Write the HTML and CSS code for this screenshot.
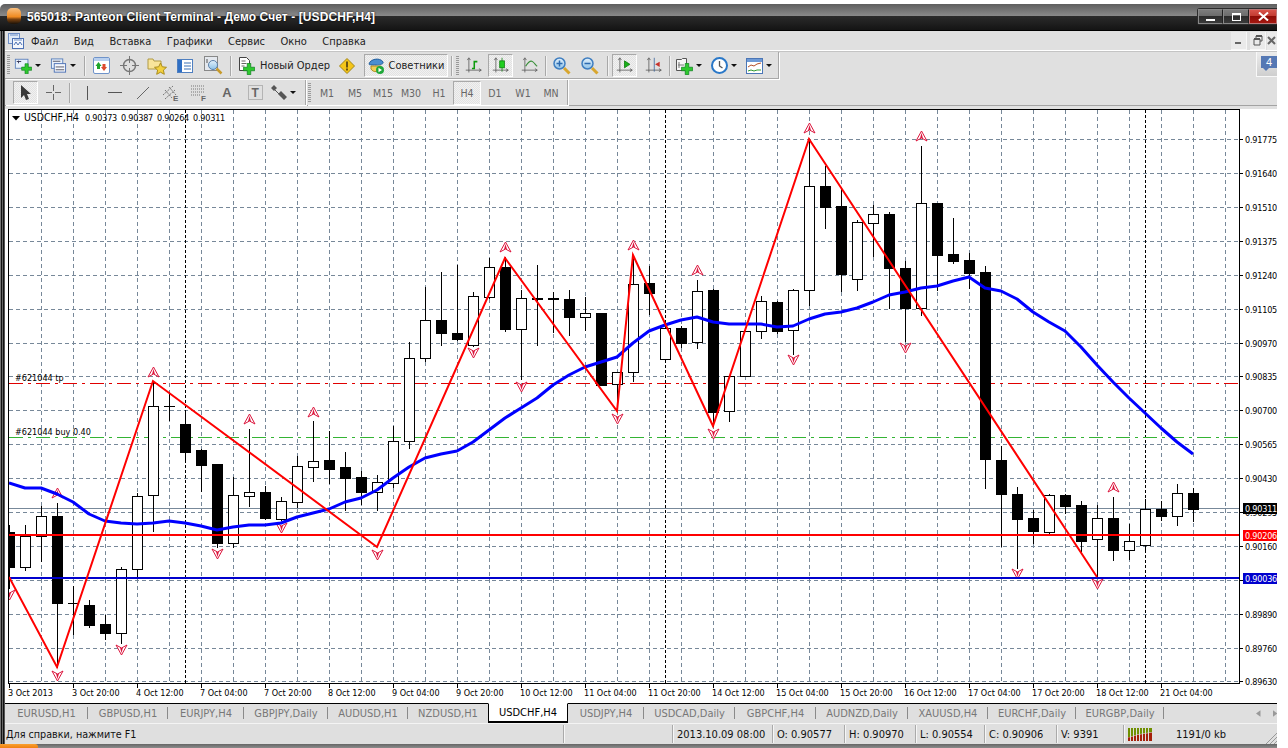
FILE: index.html
```html
<!DOCTYPE html>
<html lang="ru">
<head>
<meta charset="utf-8">
<title>565018: Panteon Client Terminal</title>
<link rel="stylesheet" href="styles.css">
</head>
<body>
<svg class="defs" width="0" height="0" aria-hidden="true">
  <defs>
    <symbol id="plus" viewBox="0 0 17 17"><path d="M6 .5h5v5.5h5.500v5H11v5.500H6V11H.5V6H6z" fill="#2ec92e" stroke="#0b7d20"/></symbol>
    <symbol id="axes" viewBox="0 0 22 22"><path d="M5 2v18M1 17h20M3 4l2-3 2 3M18 15l3 2-3 2" fill="none" stroke="#555" stroke-width="1"/></symbol>
    <linearGradient id="lens" x1="0" y1="0" x2="0" y2="1"><stop offset="0" stop-color="#e4f1fb"/><stop offset="1" stop-color="#8ec2e8"/></linearGradient>
  </defs>
</svg>
<div class="app">
  <header class="titlebar">
    <span class="logo"></span>
    <h1 class="title">565018: Panteon Client Terminal - Демо Счет - [USDCHF,H4]</h1>
    <div class="winbtns">
      <span class="wb wb-min"><i></i></span>
      <span class="wb wb-max"><i></i></span>
      <span class="wb wb-close"><svg width="11" height="9" viewBox="0 0 11 9"><path d="M1 .5l9 8M10 .5l-9 8" stroke="#fff" stroke-width="2"/></svg></span>
    </div>
  </header>

  <div class="frame">
    <nav class="menubar">
      <svg class="menuicon" width="16" height="16" viewBox="0 0 16 16"><rect x=".5" y=".5" width="11" height="10" fill="#dfe9f7" stroke="#6f8fc6"/><rect x="4.500" y="5.500" width="11" height="10" fill="#f4f7fc" stroke="#4e72b4"/><path d="M6 12l2-3 2 3 2-3 2 3" fill="none" stroke="#4e72b4"/><path d="M2 2h8M6 7h8" stroke="#6f8fc6"/></svg>
      <span class="menuitem">Файл</span>
      <span class="menuitem">Вид</span>
      <span class="menuitem">Вставка</span>
      <span class="menuitem">Графики</span>
      <span class="menuitem">Сервис</span>
      <span class="menuitem">Окно</span>
      <span class="menuitem">Справка</span>
      <div class="mdibtns">
        <span class="mdi"><svg width="9" height="9" viewBox="0 0 9 9"><rect x="1" y="6" width="6" height="2" fill="#666"/></svg></span>
        <span class="mdi"><svg width="10" height="11" viewBox="0 0 10 11"><path d="M3 3V1h6v5H7M1 4h6v6H1z" fill="none" stroke="#555"/><path d="M1 4h6M3 1h6" stroke="#555" stroke-width="2"/></svg></span>
        <span class="mdi mdi-x"><svg width="10" height="9" viewBox="0 0 10 9"><path d="M1 1l7 7M8 1L1 8" stroke="#666" stroke-width="2"/></svg></span>
      </div>
    </nav>
    <div class="rule"></div>

    <div class="tbrow">
      <div class="tb tb-one">
        <span class="grip grip-a"></span>
        <span class="grp g-30 p3">
          <svg width="20" height="18" viewBox="0 0 20 18"><rect x="1.500" y="1.500" width="14" height="10" fill="#e8f0fb" stroke="#5c80bb"/><path d="M3 4h5M5 3v3" stroke="#335"/><use href="#plus" x="8" y="6" width="12" height="12"/></svg>
          <i class="drop"></i>
        </span>
        <span class="sp6"></span>
        <span class="grp g-28 p2">
          <svg width="18" height="18" viewBox="0 0 18 18"><rect x="1.500" y="1.500" width="12" height="10" fill="#e8f0fb" stroke="#5c80bb"/><rect x="4.500" y="6.500" width="12" height="9" fill="#f4f7fc" stroke="#4e72b4"/><path d="M6 10h9M6 13h9M3 4h8" stroke="#556" /></svg>
          <i class="drop"></i>
        </span>
        <span class="sp3"></span>
        <span class="sep"></span>
        <span class="btn"><svg width="17" height="17" viewBox="0 0 17 17"><rect x=".5" y=".5" width="16" height="16" rx="1.500" fill="#fff" stroke="#6f93c9"/><rect x="1" y="1" width="15" height="3" fill="#b8cfee"/><path d="M5.500 5l3 4H7v3H4V9H2.500z" fill="#1fa52a"/><path d="M11 14l-3-4h1.500V7h3v3H14z" fill="#dc4a2c"/></svg></span>
        <span class="btn"><svg width="19" height="19" viewBox="0 0 19 19"><circle cx="9.500" cy="9.500" r="6" fill="none" stroke="#777" stroke-width="1.500"/><path d="M9.500 0v7M9.500 12v7M0 9.500h7M12 9.500h7" stroke="#777"/></svg></span>
        <span class="btn"><svg width="20" height="19" viewBox="0 0 20 19"><path d="M1 3h5l1 2h7v8H1z" fill="#f8e49a" stroke="#b09a45"/><path d="M13.500 7l1.800 3.800 4.200.5-3.100 2.800.9 4.200-3.800-2.100-3.800 2.100.9-4.200-3.100-2.800 4.200-.5z" fill="#f3d03e" stroke="#a98c1c"/></svg></span>
        <span class="btn"><svg width="16" height="16" viewBox="0 0 16 16"><rect x=".5" y="1.500" width="15" height="13" fill="#fff" stroke="#4f7fc0"/><rect x="1" y="2" width="4" height="12" fill="#2f6fc4"/><path d="M7 5h7M7 8h7M7 11h7" stroke="#3b70b5"/></svg></span>
        <span class="btn"><svg width="19" height="19" viewBox="0 0 19 19"><rect x=".5" y=".5" width="13" height="14" fill="#e4e8ee" stroke="#888"/><circle cx="9" cy="9" r="4.500" fill="url(#lens)" stroke="#5b7fa8"/><path d="M12.500 12.500l5 5" stroke="#c79a2b" stroke-width="2.500"/><path d="M3 3v4" stroke="#555"/></svg></span>
        <span class="sep"></span>
        <span class="orderbtn">
          <svg width="17" height="18" viewBox="0 0 17 18"><path d="M1.500 .5h7l3 3v10h-10z" fill="#fff" stroke="#444"/><path d="M3.500 4h4M3.500 6.500h5M3.500 9h3" stroke="#666"/><use href="#plus" x="5" y="6" width="12" height="12"/></svg>
          <span class="tbtext">Новый Ордер</span>
        </span>
        <span class="btn"><svg width="16" height="16" viewBox="0 0 16 16"><path d="M8 .5L15.500 8 8 15.500.5 8z" fill="#f5c518" stroke="#a08518"/><rect x="7" y="3.500" width="2" height="6" fill="#6b5310"/><rect x="7" y="10.500" width="2" height="2" fill="#6b5310"/></svg></span>
        <span class="sp3"></span>
        <span class="pressed pressed-ea">
          <svg width="17" height="16" viewBox="0 0 17 16"><path d="M1 6c1-5 11-7 14-2 1 2-3 3-7 3S1 7 1 6z" fill="#4b8fd0" stroke="#27609c"/><path d="M3 8h10v3c-1 3-8 4-10 0z" fill="#f2cf55" stroke="#ab8c22"/><circle cx="12" cy="12" r="4" fill="#1fa83a"/><path d="M10.500 9.800v4.400l3.500-2.200z" fill="#fff"/></svg>
          <span class="tbtext">Советники</span>
        </span>
        <span class="sep"></span>
        <span class="grip grip-b"></span>
        <span class="btn b26"><svg width="17" height="17" viewBox="0 0 22 22"><use href="#axes" width="22" height="22"/><path d="M9 15h3V6h4" fill="none" stroke="#0d9b0d" stroke-width="2"/></svg></span>
        <span class="sp2"></span>
        <span class="pressed b25"><svg width="17" height="17" viewBox="0 0 22 22"><use href="#axes" width="22" height="22"/><path d="M13 1v18" stroke="#0a7a0a"/><rect x="10" y="5" width="6" height="9" fill="#1fcf1f" stroke="#0a7a0a"/></svg></span>
        <span class="sp3"></span>
        <span class="btn b26"><svg width="17" height="17" viewBox="0 0 22 22"><use href="#axes" width="22" height="22"/><path d="M6 12c3-5 6-8 9-6s4 5 6 6" fill="none" stroke="#3a8f3a" stroke-width="1.500"/></svg></span>
        <span class="sep"></span>
        <span class="btn"><svg width="18" height="18" viewBox="0 0 18 18"><circle cx="6.500" cy="6.500" r="5.500" fill="url(#lens)" stroke="#3f7ec0" stroke-width="1.500"/><path d="M3.500 6.500h6M6.500 3.500v6" stroke="#2d6bb0" stroke-width="1.500"/><path d="M11 11l5.500 5.500" stroke="#d8a62e" stroke-width="3"/></svg></span>
        <span class="btn"><svg width="18" height="18" viewBox="0 0 18 18"><circle cx="6.500" cy="6.500" r="5.500" fill="url(#lens)" stroke="#3f7ec0" stroke-width="1.500"/><path d="M3.500 6.500h6" stroke="#2d6bb0" stroke-width="1.500"/><path d="M11 11l5.500 5.500" stroke="#d8a62e" stroke-width="3"/></svg></span>
        <span class="sep"></span>
        <span class="sp2"></span>
        <span class="pressed b25"><svg width="17" height="17" viewBox="0 0 22 22"><use href="#axes" width="22" height="22"/><path d="M11 5v9l7-4.500z" fill="#19b019" stroke="#0a7a0a"/></svg></span>
        <span class="sp3"></span>
        <span class="btn b26"><svg width="17" height="17" viewBox="0 0 22 22"><use href="#axes" width="22" height="22"/><path d="M12 1v18" stroke="#335f9a"/><path d="M13 9.500l6-3.500v7z" fill="#c8322b"/></svg></span>
        <span class="sep"></span>
        <span class="grp g-34 p4">
          <svg width="18" height="18" viewBox="0 0 18 18"><path d="M1.500 2.500h5l1-1 4 0v12h-10z" fill="#f7f7f7" stroke="#555"/><path d="M4 5v6M3 8h6" stroke="#777"/><use href="#plus" x="6" y="6" width="12" height="12"/></svg>
          <i class="drop"></i>
        </span>
        <span class="grp g-34 p3">
          <svg width="17" height="17" viewBox="0 0 17 17"><circle cx="8.500" cy="8.500" r="7.500" fill="#fff" stroke="#2a78c8" stroke-width="2"/><path d="M8.500 4v5l3 2" fill="none" stroke="#555" stroke-width="1.300"/></svg>
          <i class="drop"></i>
        </span>
        <span class="grp g-36 p4">
          <svg width="17" height="16" viewBox="0 0 17 16"><rect x=".5" y=".5" width="16" height="15" fill="#fff" stroke="#4b76b6"/><rect x="1" y="1" width="15" height="3" fill="#6e9ad6"/><path d="M2 9l3-2 3 1 3-2 4-1" fill="none" stroke="#b4502a"/><path d="M2 13l3-1 3 1 3-1 4 0" fill="none" stroke="#2f9a2f"/></svg>
          <i class="drop"></i>
        </span>
      </div>
      <span class="notice"><span class="bubble">4</span></span>
    </div>

    <div class="tbrow tbrow-two">
      <div class="tb tb-draw">
        <span class="pressed b25"><svg width="12" height="16" viewBox="0 0 12 16"><path d="M1 0v13l3-3 2 5 3-1-2-5h4z" fill="#3a3a3a"/></svg></span>
        <span class="sp3"></span>
        <span class="btn b25"><svg width="15" height="15" viewBox="0 0 15 15"><path d="M7.500 0v6M7.500 9v6M0 7.500h6M9 7.500h6" stroke="#666"/></svg></span>
        <span class="sep s-draw"></span>
        <span class="btn"><svg width="3" height="14" viewBox="0 0 3 14"><path d="M1.500 0v14" stroke="#555"/></svg></span>
        <span class="btn"><svg width="14" height="3" viewBox="0 0 14 3"><path d="M0 1.500h14" stroke="#555" stroke-width="1.200"/></svg></span>
        <span class="btn"><svg width="14" height="14" viewBox="0 0 14 14"><path d="M1 13L13 1" stroke="#666"/></svg></span>
        <span class="btn"><svg width="18" height="18" viewBox="0 0 18 18"><path d="M1 11l10-9M3 15l10-9M3 6l7 8M7 3l7 8" stroke="#777" stroke-dasharray="2 1"/><text class="icontext" x="11" y="17">E</text></svg></span>
        <span class="btn"><svg width="18" height="18" viewBox="0 0 18 18"><path d="M1 2h13M1 5h13M1 8h13M1 11h9" stroke="#777" stroke-dasharray="1 1"/><text class="icontext" x="11" y="17">F</text></svg></span>
        <span class="btn btn-a">A</span>
        <span class="btn"><svg width="15" height="15" viewBox="0 0 15 15"><rect x=".5" y=".5" width="14" height="14" fill="none" stroke="#888" stroke-dasharray="1 1"/><text class="icontext icontext-t" x="3.500" y="12">T</text></svg></span>
        <span class="grp g-32 p5">
          <svg width="16" height="15" viewBox="0 0 16 15"><path d="M3 0L6 3 3 6 0 3zM10 6l3 3-3 3-3-3zM13 9l3 3-3 3-3-3z" fill="#555"/><path d="M4 5l5 5" stroke="#555"/></svg>
          <i class="drop"></i>
        </span>
      </div>
      <div class="tb tb-periods">
        <span class="grip grip-c"></span>
        <span class="period">M1</span>
        <span class="period">M5</span>
        <span class="period">M15</span>
        <span class="period">M30</span>
        <span class="period">H1</span>
        <span class="period period-on"><b>H4</b></span>
        <span class="period">D1</span>
        <span class="period">W1</span>
        <span class="period">MN</span>
      </div>
    </div>

    <svg id="chart" class="chart" width="1272" height="597" viewBox="5 106 1272 597" role="img" aria-label="USDCHF H4"></svg>

    <div class="tabs">
      <span class="tab w83">EURUSD,H1</span>
      <span class="tab w80">GBPUSD,H1</span>
      <span class="tab w76">EURJPY,H4</span>
      <span class="tab w84">GBPJPY,Daily</span>
      <span class="tab w80">AUDUSD,H1</span>
      <span class="tab w80 tab-pre">NZDUSD,H1</span>
      <span class="tab w80 tab-active">USDCHF,H4</span>
      <span class="tab w76">USDJPY,H4</span>
      <span class="tab w91">USDCAD,Daily</span>
      <span class="tab w81">GBPCHF,H4</span>
      <span class="tab w92">AUDNZD,Daily</span>
      <span class="tab w80">XAUUSD,H4</span>
      <span class="tab w88">EURCHF,Daily</span>
      <span class="tab w88">EURGBP,Daily</span>
      <span class="tabnav">
        <svg width="5" height="7" viewBox="0 0 5 7"><path d="M5 0v7L0 3.500z" fill="#999"/></svg>
        <svg width="5" height="7" viewBox="0 0 5 7"><path d="M0 0v7l5-3.500z" fill="#999"/></svg>
      </span>
    </div>

    <footer class="status">
      <span class="cell c-help">Для справки, нажмите F1</span>
      <span class="cell c-blank"></span>
      <span class="cell c-date">2013.10.09 08:00</span>
      <span class="cell c-o">O: 0.90577</span>
      <span class="cell c-h">H: 0.90970</span>
      <span class="cell c-l">L: 0.90554</span>
      <span class="cell c-c">C: 0.90906</span>
      <span class="cell c-v">V: 9391</span>
      <span class="cell c-bars">
        <svg width="24" height="13" viewBox="0 0 24 13">
          <path d="M0 0h24v4l-3 .5-3 .5-3 .5-3 .5-3 .5-3 1-3 1-3 1z" fill="#6f8f00"/>
          <path d="M0 9.500l3-.5 3-1 3-1 3-.5 3-.5 3-.5 3-.5 3-.5V13H0z" fill="#a5200a"/>
          <path d="M2.500 0v13M5.500 0v13M8.500 0v13M11.500 0v13M14.500 0v13M17.500 0v13M20.500 0v13" stroke="#dfdfdf"/>
        </svg>
      </span>
      <span class="cell c-kb">1191/0 kb</span>
      <svg class="sizegrip" width="12" height="12" viewBox="0 0 12 12"><path d="M12 1L1 12M12 5l-7 7M12 9l-3 3" stroke="#999"/></svg>
    </footer>
  </div>

  <div class="taskbar"><span class="startbtn"></span></div>
</div>
<script src="chart.js"></script>
</body>
</html>
```
FILE: styles.css
```css
* { box-sizing: border-box; }
html, body { margin: 0; padding: 0; background: #fff; }
body { width: 1288px; height: 748px; overflow: hidden; font-family: "DejaVu Sans Condensed", "Liberation Sans", sans-serif; }
.defs { position: absolute; }

.app { width: 1277px; height: 744px; margin-top: 4px; display: flex; flex-direction: column; overflow: hidden; border-top-left-radius: 5px; }

/* title bar */
.titlebar { height: 27px; flex: none; display: flex; align-items: flex-start; padding-left: 7px; border-bottom: 1px solid #000;
  background: linear-gradient(#5e5e5e 0, #8a8a8a 12px, #2b2b2b 12px, #141414 26px); }
.logo { width: 14px; height: 16px; margin-top: 4px; border-radius: 5px; flex: none;
  background: linear-gradient(#f9c080 0, #f08a20 55%, #7a4210 70%, #1b1208 100%); }
.title { margin: 5px 0 0 6px; font: bold 12px/16px "Liberation Sans", sans-serif; color: #fff; letter-spacing: .09px; white-space: nowrap; text-shadow: 0 0 2px #000; }
.winbtns { margin-left: auto; margin-top: 4px; height: 17px; display: flex; border: 1px solid #2c2c2c; border-right: 0; border-radius: 3px 0 0 3px; background: #333; }
.wb { height: 15px; display: flex; align-items: center; justify-content: center; border: 1px solid #888; border-right-color: #222; }
.wb-min { width: 25px; background: linear-gradient(#7c7c7c 0, #6a6a6a 50%, #2c2c2c 50%, #3a3a3a); align-items: flex-end; padding-bottom: 2px; }
.wb-min i { width: 9px; height: 2px; background: #fff; }
.wb-max { width: 26px; background: linear-gradient(#7c7c7c 0, #6a6a6a 50%, #2c2c2c 50%, #3a3a3a); }
.wb-max i { width: 9px; height: 8px; border: 1px solid #fff; border-top-width: 2px; }
.wb-close { width: 28px; background: linear-gradient(#d8534a 0, #c0392f 50%, #8e0c06 50%, #a41810); border-color: #b77; }

/* frame below the title */
.frame { flex: 1; min-height: 0; display: flex; flex-direction: column; padding-left: 5px;
  background: linear-gradient(to right, #777 0 1px, #111 1px 2px, #666 2px 3px, #111 3px 4px, #555 4px 5px); }

.menubar { height: 19px; flex: none; display: flex; align-items: center; background: #e0e0e0; padding-left: 3px; font-size: 11px; color: #222; }
.menuicon { margin-right: 7px; flex: none; }
.menuitem { margin-right: 15.500px; white-space: nowrap; padding-top: 1px; }
.mdibtns { margin-left: auto; display: flex; height: 18px; }
.mdi { width: 16px; margin-left: 3px; display: flex; align-items: center; justify-content: center; background: #eaeaea; border-right: 1px solid #f7f7f7; border-bottom: 1px solid #f7f7f7; }
.mdi-x { width: 10px; margin-left: 1px; justify-content: flex-start; overflow: hidden; border: 0; }
.rule { height: 2px; flex: none; background: #fff; border-bottom: 1px solid #c4c4c4; }

.tbrow { height: 27px; flex: none; display: flex; background: #e0e0e0; }
.tbrow-two { border-bottom: 1px solid #a3a3a3; }
.tb { display: flex; align-items: center; flex: none; height: 27px; padding-top: 1px; border-bottom: 1px solid #a8a8a8; border-right: 1px solid #a8a8a8; box-shadow: 1px 1px 0 #fff; }
.tb-one { width: 774px; position: relative; padding-left: 9px; }
.tb-draw { width: 301px; padding-left: 8px; height: 26px; border-bottom: 0; }
.tb-periods { width: 261px; margin-left: 1px; height: 26px; border-bottom: 0; }

.grip { flex: none; height: 20px; width: 3px; background: repeating-linear-gradient(#9a9a9a 0 1px, #e0e0e0 1px 2px); }
.grip-a { position: absolute; left: 2px; top: 3px; }
.grip-b { width: 3px; margin: 0 1px 0 2px; }
.grip-c { margin: 0 2px 0 1px; }
.sp2 { width: 2px; flex: none; }
.sp3 { width: 3px; flex: none; }
.sp6 { width: 6px; flex: none; }
.sep { width: 6px; height: 20px; flex: none; position: relative; }
.sep::before { content: ""; display: block; width: 1px; height: 100%; margin-left: 3px; background: #a8a8a8; box-shadow: 1px 0 0 #f2f2f2; }
.s-draw { width: 7px; }
.btn { width: 28px; height: 24px; flex: none; display: flex; align-items: center; justify-content: center; }
.b26 { width: 26px; }
.b25 { width: 25px; }
.grp { height: 24px; flex: none; display: flex; align-items: center; justify-content: flex-end; gap: 3px; }
.g-30 { width: 30px; } .g-28 { width: 28px; } .g-34 { width: 34px; } .g-36 { width: 36px; } .g-32 { width: 32px; }
.p2 { padding-right: 2px; } .p3 { padding-right: 3px; } .p4 { padding-right: 4px; } .p5 { padding-right: 5px; }
.drop { width: 0; height: 0; flex: none; border: 3px solid transparent; border-top: 3px solid #111; border-bottom: 0; }
.orderbtn { width: 100px; height: 24px; flex: none; display: flex; align-items: center; padding-left: 5px; gap: 5px; }
.tbtext { font-size: 11px; color: #222; white-space: nowrap; }
.pressed { height: 23px; flex: none; display: flex; align-items: center; justify-content: center; border: 1px solid; border-color: #a9a9a9 #fff #fff #a9a9a9;
  background: repeating-conic-gradient(#f1f1f1 0 25%, #e2e2e2 0 50%) 0 0 / 2px 2px; }
.pressed-ea { width: 84px; gap: 4px; }
.icontext { font: bold 8px "Liberation Sans", sans-serif; fill: #666; }
.icontext-t { font-size: 12px; }
.btn-a { font: bold 13px "Liberation Sans", sans-serif; color: #666; }
.period { width: 28px; height: 24px; flex: none; display: flex; align-items: center; justify-content: center; font-size: 10.500px; color: #666; }
.period b { font-weight: normal; }
.period-on { border: 1px solid; border-color: #a9a9a9 #fff #fff #a9a9a9; background: repeating-conic-gradient(#f1f1f1 0 25%, #e2e2e2 0 50%) 0 0 / 2px 2px; }
.notice { margin-left: auto; width: 21px; height: 25px; display: flex; align-items: center; border-bottom: 1px solid #f8f8f8; border-left: 1px solid #f8f8f8; background: linear-gradient(#ececec, #cfcfcf); overflow: hidden; }
.bubble { width: 18px; height: 12px; margin-left: 4px; margin-top: -5px; background: #5578b4; color: #fff; font: 11px/12px "Liberation Sans", sans-serif; text-align: center; position: relative; }
.bubble::after { content: ""; position: absolute; left: 2px; top: 12px; border: 3px solid transparent; border-top-color: #5578b4; }

.chart { display: block; flex: none; }
.grid { stroke: #778899; stroke-width: 1; stroke-dasharray: 4 3; shape-rendering: crispEdges; fill: none; }
.sepline { stroke: #000; stroke-dasharray: 3 2; stroke-width: 1; shape-rendering: crispEdges; }
.axisline { stroke: #000; stroke-width: 1; shape-rendering: crispEdges; fill: none; }
.ctext { font: 9px "DejaVu Sans Condensed", "Liberation Sans", sans-serif; fill: #000; }
.ctext-name { font-size: 10.400px; }
.ctext-price { font-size: 9px; letter-spacing: -.2px; }
.ctext-light { fill: #fff; }
.wick { stroke: #000; stroke-width: 1; shape-rendering: crispEdges; }
.body-up { fill: #fff; stroke: #000; shape-rendering: crispEdges; }
.body-dn { fill: #000; stroke: #000; shape-rendering: crispEdges; }
.ma { fill: none; stroke: #0000ff; stroke-width: 3; stroke-linejoin: round; }
.zig { fill: none; stroke: #ff0000; stroke-width: 2; }
.ordtp { stroke: #e00000; stroke-dasharray: 14 5 3 5; shape-rendering: crispEdges; }
.ordbuy { stroke: #34b434; stroke-dasharray: 14 5 3 5; shape-rendering: crispEdges; }
.bid { stroke: #778899; shape-rendering: crispEdges; }
.hred { stroke: #ff0000; stroke-width: 2; shape-rendering: crispEdges; }
.hblue { stroke: #0000cd; stroke-width: 2; shape-rendering: crispEdges; }
.mark-out { fill: #fff; stroke: #dc143c; stroke-width: 1; }
.mark-in { fill: #dc143c; }
.lab-bid { fill: #000; } .lab-red { fill: #ff0000; } .lab-blue { fill: #0000cd; }

.tabs { height: 20px; flex: none; display: flex; align-items: stretch; background: #dfdfdf; border-top: 1px solid #000; position: relative; }
.tab { display: flex; align-items: center; justify-content: center; flex: none; padding-bottom: 1px; font-size: 11px; color: #777; position: relative; white-space: nowrap; }
.tab::after { content: ""; position: absolute; right: 0; top: 3px; bottom: 4px; width: 1px; background: #8a8a8a; }
.tab-pre::after, .tab-active::after { display: none; }
.tab-active { background: #fff; color: #000; margin-top: -1px; border: 1px solid #000; border-top-color: #fff; border-bottom-width: 2px; }
.w76 { width: 76px; } .w80 { width: 80px; } .w81 { width: 81px; } .w83 { width: 83px; } .w84 { width: 84px; } .w88 { width: 88px; } .w91 { width: 91px; } .w92 { width: 92px; }
.tabnav { margin-left: auto; display: flex; align-items: center; gap: 12px; padding-right: 0; width: 21px; }

.status { height: 21px; flex: none; display: flex; align-items: center; background: #dfdfdf; border-top: 1px solid #f4f4f4; font-size: 11px; color: #111; position: relative; }
.cell { height: 18px; display: flex; align-items: center; flex: none; padding-left: 4px; border-right: 1px solid #aaa; box-shadow: 1px 0 0 #f6f6f6; white-space: nowrap; }
.c-help { width: 559px; padding-left: 1px; font-size: 10.700px; }
.c-blank { width: 109px; }
.c-date { width: 100px; }
.c-o { width: 72px; }
.c-h { width: 71px; }
.c-l { width: 69px; }
.c-c { width: 72px; }
.c-v { width: 67px; }
.c-bars { width: 48px; border-right: 0; box-shadow: none; }
.c-kb { border-right: 0; box-shadow: none; }
.sizegrip { position: absolute; right: 0; bottom: 0; }

.taskbar { height: 4px; flex: none; background: linear-gradient(#666, #8c8c8c); margin-top: 0; }
.startbtn { display: block; width: 38px; height: 4px; background: linear-gradient(#f9a030, #f07f10); border-top-right-radius: 3px; }
```
FILE: chart.js
```js
(function () {
  var c = [
    [532,567,525,588,1],[536,567,525,570,0],[516,536,506,561,0],[516,603,503,667,1],[603,603,586,634,0],
    [605,625,600,627,1],[624,633,615,639,1],[569,633,567,643,0],[496,569,493,578,0],[406,495,382,531,0],
    [406,406,392,420,0],[424,452,413,460,1],[450,465,449,491,1],[464,543,464,547,1],[495,543,477,547,0],
    [492,496,429,506,0],[492,518,486,519,1],[501,519,497,520,0],[466,502,456,507,0],[461,467,421,481,0],
    [460,469,431,483,1],[467,478,452,510,1],[477,492,471,504,1],[482,492,475,510,0],[441,483,426,487,0],
    [358,441,342,448,0],[320,358,287,361,0],[320,333,272,345,1],[333,339,265,340,1],[296,345,292,346,0],
    [267,297,258,298,0],[267,329,257,331,1],[298,329,290,379,0],[298,299,265,345,1],[298,299,292,332,1],
    [299,317,290,335,1],[313,317,297,330,0],[313,385,313,385,1],[372,384,372,402,0],[284,372,257,381,0],
    [283,293,266,314,1],[328,359,328,359,0],[328,343,326,347,1],[291,342,280,348,0],[290,412,289,426,1],
    [376,411,376,421,0],[331,376,331,376,0],[301,331,296,338,0],[302,331,301,333,1],[290,330,289,354,0],
    [186,290,139,305,0],[186,207,166,228,1],[206,274,188,291,1],[222,279,220,290,0],[214,223,205,256,0],
    [214,268,212,308,1],[268,308,261,341,1],[203,308,146,315,0],[203,255,203,290,1],[254,261,218,263,1],
    [260,273,253,288,1],[272,459,266,488,1],[460,494,446,546,1],[494,519,487,568,1],[518,531,510,543,1],
    [495,532,494,533,0],[495,506,494,513,1],[505,541,501,551,1],[518,539,505,577,0],[518,550,497,560,1],
    [541,550,524,559,0],[509,545,499,550,0],[509,516,501,520,1],[493,516,484,525,0],[493,509,488,521,1]
  ];
  var ma = [483,488,488,494,502,514,521,523,524,523,521,523,526,530,527,525,525,523,517,513,
    509,502,498,490,478,467,458,454,451,442,430,418,408,398,385,375,367,362,357,343,
    331,325,320,317,322,324,324,324,327,326,319,314,312,308,302,295,292,288,286,281,
    277,288,291,299,312,322,331,347,365,382,398,413,428,442,454];
  var prices = [[139,"0.91775"],[173,"0.91640"],[207,"0.91510"],[241,"0.91375"],[275,"0.91240"],[309,"0.91105"],
    [343,"0.90970"],[376,"0.90835"],[410,"0.90700"],[444,"0.90565"],[478,"0.90430"],[512,"0.90295"],
    [546,"0.90160"],[580,""],[614,"0.89890"],[648,"0.89760"],[681,"0.89630"]];
  var times = ["3 Oct 2013","3 Oct 20:00","4 Oct 12:00","7 Oct 04:00","7 Oct 20:00","8 Oct 12:00","9 Oct 04:00",
    "9 Oct 20:00","10 Oct 12:00","11 Oct 04:00","11 Oct 20:00","14 Oct 12:00","15 Oct 04:00","15 Oct 20:00",
    "16 Oct 12:00","17 Oct 04:00","17 Oct 20:00","18 Oct 12:00","21 Oct 04:00"];
  var ups = [[57,493],[153,372],[249,419],[313,412],[505,247],[633,245],[697,270],[809,128],[921,136],[1113,487]];
  var dns = [[9,595],[57,676],[121,650],[217,554],[281,528],[377,555],[473,353],[521,387],[617,419],[713,434],[793,360],[905,348],[1017,574],[1097,584]];
  var zig = "9,577 57,667 153,381 377,547 505,258 617,411 633,255 713,426 809,139 1097,577";

  var s = [];
  function line(cls, x1, y1, x2, y2) {
    s.push('<line class="' + cls + '" x1="' + x1 + '" y1="' + y1 + '" x2="' + x2 + '" y2="' + y2 + '"/>');
  }
  function text(cls, x, y, t) {
    s.push('<text class="ctext ' + cls + '" x="' + x + '" y="' + y + '">' + t + '</text>');
  }
  function mark(x, y, up) {
    var k = up ? 1 : -1;
    s.push('<g transform="translate(' + x + ' ' + y + ') scale(1 ' + k + ')">' +
      '<path class="mark-out" d="M-5.500 5L0-5 5.500 5 0 2z"/><path class="mark-in" d="M0-3L1.500 2.500 0 2-1.500 2.500z"/></g>');
  }

  s.push('<defs><clipPath id="plot"><rect x="9" y="110" width="1230" height="573"/></clipPath></defs>');
  s.push('<rect x="5" y="106" width="1272" height="597" fill="#fff"/>');
  s.push('<rect x="5" y="106" width="1272" height="3" fill="#e0e0e0"/>');
  s.push('<g clip-path="url(#plot)">');
  var i, x;
  for (i = 0; i < prices.length; i++) line("grid", 9, prices[i][0] + .5, 1239, prices[i][0] + .5);
  for (x = 41; x < 1239; x += 32) if ((x - 185) % 480 !== 0) line("grid", x + .5, 110, x + .5, 683);
  [185, 665, 1145].forEach(function (p) { line("sepline", p + .5, 110, p + .5, 683); });
  line("ordtp", 9, 383.5, 1239, 383.5);
  line("ordbuy", 9, 437.5, 1239, 437.5);
  line("bid", 9, 508.5, 1239, 508.5);
  c.forEach(function (d, n) {
    var cx = 9 + 16 * n + .5;
    line("wick", cx, d[2], cx, d[3] + 1);
    if (d[1] > d[0]) {
      s.push('<rect class="' + (d[4] ? "body-dn" : "body-up") + '" x="' + (cx - 5) + '" y="' + (d[0] + .5) + '" width="10" height="' + (d[1] - d[0]) + '"/>');
    } else {
      line("wick", cx - 5.5, d[0] + .5, cx + 5.5, d[0] + .5);
    }
  });
  ups.forEach(function (m) { mark(m[0] + .5, m[1], true); });
  dns.forEach(function (m) { mark(m[0] + .5, m[1], false); });
  s.push('<polyline class="ma" points="' + ma.map(function (v, n) { return (9 + 16 * n) + "," + v; }).join(" ") + '"/>');
  line("hred", 9, 535, 1239, 535);
  line("hblue", 9, 578, 1239, 578);
  s.push('<polyline class="zig" points="' + zig + '"/>');
  s.push('</g>');

  s.push('<rect class="axisline" x="8.500" y="109.500" width="1231" height="574"/>');
  prices.forEach(function (p) {
    line("axisline", 1240, p[0] + .5, 1243, p[0] + .5);
    if (p[1]) text("ctext-price", 1245, p[0] + 4, p[1]);
  });
  times.forEach(function (t, n) {
    var tx = 9 + 64 * n;
    line("axisline", tx + .5, 684, tx + .5, 688);
    text("", tx - 1, 696, t);
  });

  s.push('<path d="M12 116h8l-4 4.500z" fill="#000"/>');
  text("ctext-name", 24, 121, "USDCHF,H4");
  text("ctext-price", 85, 121, "0.90373");
  text("ctext-price", 121, 121, "0.90387");
  text("ctext-price", 157, 121, "0.90264");
  text("ctext-price", 193, 121, "0.90311");
  text("", 15, 381, "#621044 tp");
  text("", 15, 435, "#621044 buy 0.40");

  [[503, "lab-bid", "0.90311", 512], [530, "lab-red", "0.90206", 539], [573, "lab-blue", "0.90036", 582]].forEach(function (l) {
    s.push('<rect class="' + l[1] + '" x="1243" y="' + l[0] + '" width="34" height="11"/>');
    text("ctext-price ctext-light", 1245, l[3], l[2]);
  });

  document.getElementById("chart").innerHTML = s.join("");
})();
```
